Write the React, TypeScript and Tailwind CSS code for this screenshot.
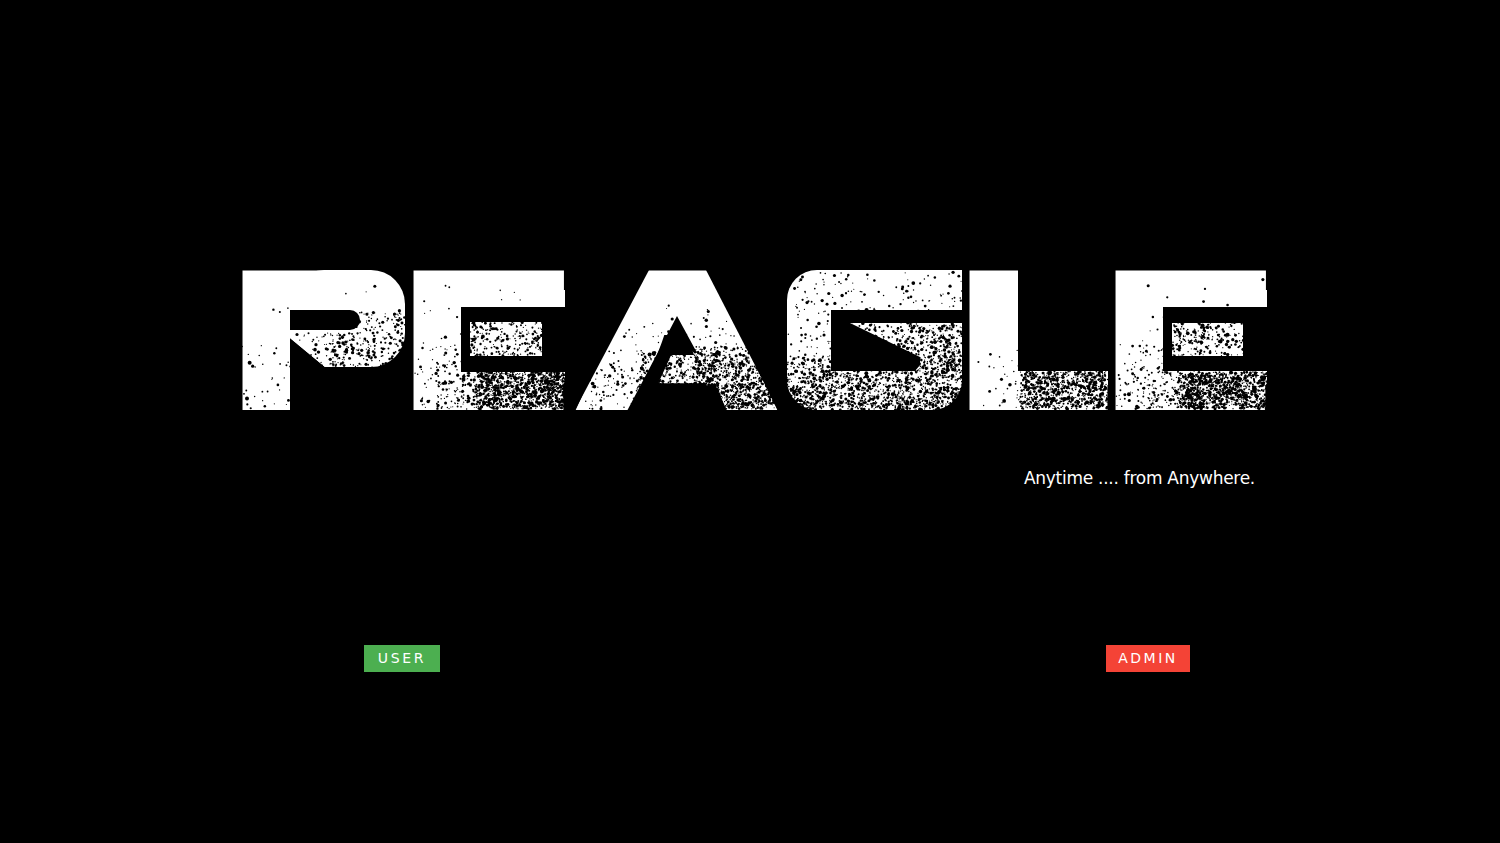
const fontStack = '"DejaVu Sans", sans-serif';

// each letter is stretched to the box it has in the logo
const letters = [
  { ch: "P", x0: 242, x1: 405 },
  { ch: "E", x0: 413, x1: 565 },
  { ch: "A", x0: 575, x1: 778 },
  { ch: "G", x0: 787, x1: 962 },
  { ch: "L", x0: 969, x1: 1108 },
  { ch: "E", x0: 1115, x1: 1267 },
];

const TOP = 270;
const BOTTOM = 410;
const LOGO_FONT = '900 200px Inter';

function letterTransform(ch: string, x0: number, x1: number) {
  const ctx = document.createElement("canvas").getContext("2d")!;
  ctx.font = LOGO_FONT;
  const m = ctx.measureText(ch);
  const inkW = m.actualBoundingBoxRight + m.actualBoundingBoxLeft;
  const inkH = m.actualBoundingBoxAscent + m.actualBoundingBoxDescent;
  const sx = (x1 - x0) / inkW;
  const sy = (BOTTOM - TOP) / inkH;
  const tx = x0 + m.actualBoundingBoxLeft * sx;
  const ty = BOTTOM - m.actualBoundingBoxDescent * sy;
  return `translate(${tx} ${ty}) scale(${sx} ${sy})`;
}

// grain: [x0, x1, y0, y1, count, skewY, skewX] (skew > 1 pushes dots to bottom / right)
type Patch = [number, number, number, number, number, number, number];

const eGrain = (dx: number): Patch[] => [
  [413 + dx, 566 + dx, 275, 320, 12, 1, 1],
  [470 + dx, 542 + dx, 322, 356, 210, 1, 1],
  [413 + dx, 500 + dx, 325, 409, 320, 2.2, 1.5],
  [475 + dx, 566 + dx, 372, 409, 1000, 1, 1.2],
];

const patches: Patch[] = [
  [242, 405, 275, 320, 10, 1, 1],
  [330, 405, 312, 367, 290, 1, 1],
  [290, 345, 332, 367, 70, 1, 1.5],
  [242, 290, 330, 410, 32, 1.6, 1],
  ...eGrain(0),
  [585, 778, 300, 409, 560, 2.2, 1.1],
  [695, 778, 345, 409, 800, 1.4, 1],
  [640, 720, 352, 386, 260, 1, 1],
  [787, 962, 272, 370, 300, 1, 1],
  [787, 962, 355, 410, 1500, 1.5, 1],
  [860, 962, 325, 370, 420, 1, 1.2],
  [1020, 1108, 371, 409, 850, 1, 1],
  [975, 1030, 340, 409, 45, 1.5, 1.8],
  ...eGrain(702),
];

function makeGrain() {
  let seed = 90210;
  const rnd = () => {
    seed = (seed + 0x6d2b79f5) | 0;
    let t = Math.imul(seed ^ (seed >>> 15), 1 | seed);
    t = (t + Math.imul(t ^ (t >>> 7), 61 | t)) ^ t;
    return ((t ^ (t >>> 14)) >>> 0) / 4294967296;
  };
  const dots: { x: number; y: number; r: number }[] = [];
  for (const [x0, x1, y0, y1, n, sy, sx] of patches) {
    for (let i = 0; i < n; i++) {
      dots.push({
        x: x0 + (x1 - x0) * Math.pow(rnd(), 1 / sx),
        y: y0 + (y1 - y0) * Math.pow(rnd(), 1 / sy),
        r: 0.55 + rnd() * rnd() * 1.5,
      });
    }
  }
  return dots;
}

const grain = makeGrain();

function Logo() {
  return (
    <svg viewBox="242 270 1026 141" className="ml-[242px] block h-[141px] w-[1026px] overflow-visible">
      {/* squarer body behind the G */}
      <rect x="787" y="270" width="175" height="140" rx="30" fill="#fff" />
      <rect x="900" y="270" width="62" height="40" fill="#fff" />

      {letters.map((l) => (
        <text
          key={l.x0}
          transform={letterTransform(l.ch, l.x0, l.x1)}
          fill="#fff"
          style={{ font: LOGO_FONT }}
        >
          {l.ch}
        </text>
      ))}

      {/* P: open counter and the cut leg */}
      <rect x="290" y="270" width="115" height="97" rx="34" fill="#fff" />
      <rect x="290" y="310" width="70" height="20" rx="10" fill="#000" />
      <rect x="290" y="310" width="30" height="20" fill="#000" />
      <polygon points="290,338 325,367 406,367 406,411 290,411" fill="#000" />
      <polygon points="290,330 345,330 345,367 325,367 290,338" fill="#fff" />

      {/* E: bars, counter and the loose block in it */}
      <rect x="461" y="290" width="104" height="18" fill="#fff" />
      <rect x="461" y="372" width="104" height="14" fill="#fff" />
      <rect x="461" y="307" width="106" height="65" fill="#000" />
      <rect x="470" y="322" width="72" height="34" fill="#fff" />
      <rect x="1163" y="290" width="104" height="18" fill="#fff" />
      <rect x="1163" y="371" width="104" height="14" fill="#fff" />
      <rect x="1163" y="307" width="106" height="64" fill="#000" />
      <rect x="1172" y="323" width="71" height="33" fill="#fff" />

      {/* A: narrower top, lower apex, crossbar that stops short of the left leg */}
      <polygon points="630,268 649,270 575,410 568,410" fill="#000" />
      <polygon points="706,270 722,268 786,410 778,410" fill="#000" />
      <polygon points="662,296 692,296 702,335 652,335" fill="#fff" />
      <polygon points="677,316 696,351 673,351 657,386 716,386 727,411 627,411" fill="#000" />

      {/* G: trim the overshoot, then the wedge counter */}
      <rect x="787" y="262" width="176" height="8" fill="#000" />
      <rect x="787" y="410" width="176" height="8" fill="#000" />
      <polygon points="831,310 963,310 963,323 850,323 920,357 920,365 915,371 831,371" fill="#000" />

      {/* L */}
      <rect x="1018" y="371" width="90" height="14" fill="#fff" />
      <rect x="1018" y="268" width="92" height="103" fill="#000" />

      {grain.map((d, i) => (
        <circle key={i} cx={d.x} cy={d.y} r={d.r} fill="#000" />
      ))}
    </svg>
  );
}

export default function App() {
  return (
    <div className="h-[843px] overflow-hidden bg-black pt-[270px]" style={{ fontFamily: fontStack }}>
      <Logo />
      <div className="mt-[55px] flex justify-end pr-[245px]">
        <p className="text-[17px] leading-[24px] tracking-[-0.27px] text-white">Anytime .... from Anywhere.</p>
      </div>
      <div className="mt-[155px] flex justify-between pl-[364px] pr-[310px]">
        <button className="h-[27px] w-[76px] bg-[#4caf50] text-[14px] tracking-[2.7px] text-white">USER</button>
        <button className="h-[27px] w-[84px] bg-[#f44336] text-[14px] tracking-[2.5px] text-white">ADMIN</button>
      </div>
    </div>
  );
}
